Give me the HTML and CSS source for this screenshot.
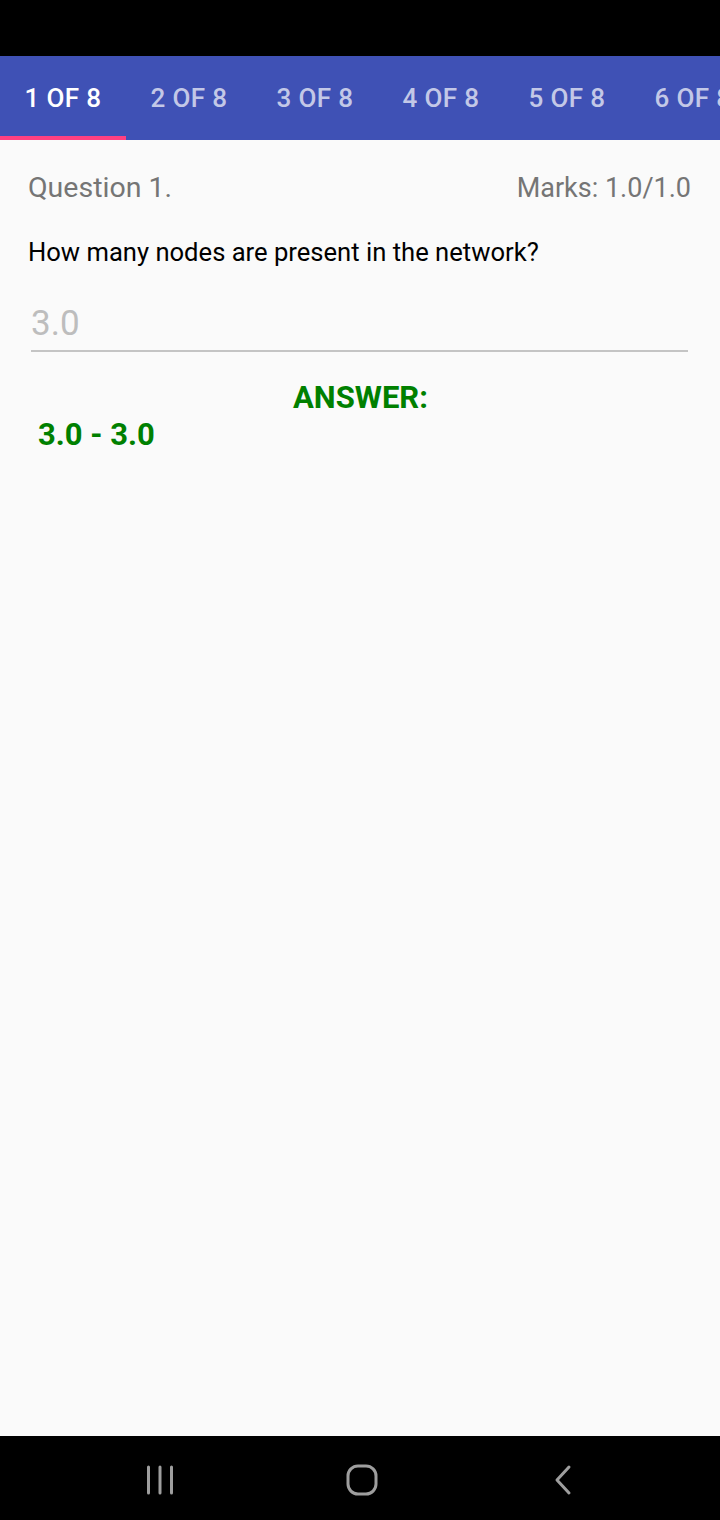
FILE: index.html
```html
<!DOCTYPE html>
<html>
<head>
<meta charset="utf-8">
<link rel="stylesheet" href="styles.css">
</head>
<body>
<div class="screen">
  <div class="status"></div>
  <div class="tabs">
    <div class="tab active">1 OF 8</div>
    <div class="tab">2 OF 8</div>
    <div class="tab">3 OF 8</div>
    <div class="tab">4 OF 8</div>
    <div class="tab">5 OF 8</div>
    <div class="tab">6 OF 8</div>
  </div>
  <div class="content">
    <div class="head-row">
      <span class="qnum">Question 1.</span>
      <span class="marks">Marks: 1.0/1.0</span>
    </div>
    <div class="qtext">How many nodes are present in the network?</div>
    <div class="field"><span class="field-val">3.0</span></div>
    <div class="answer-label">ANSWER:</div>
    <div class="answer-val">3.0 - 3.0</div>
  </div>
  <div class="navbar">
    <svg class="nav-icon" width="40" height="40" viewBox="0 0 40 40">
      <g stroke="#9e9e9e" stroke-width="3" stroke-linecap="round" fill="none">
        <line x1="8.5" y1="7" x2="8.5" y2="33"/>
        <line x1="20" y1="7" x2="20" y2="33"/>
        <line x1="31.5" y1="7" x2="31.5" y2="33"/>
      </g>
    </svg>
    <svg class="nav-icon" width="40" height="40" viewBox="0 0 40 40">
      <rect x="6" y="6" width="28" height="28" rx="10" ry="10" stroke="#9e9e9e" stroke-width="3" fill="none"/>
    </svg>
    <svg class="nav-icon" width="40" height="40" viewBox="0 0 40 40">
      <polyline points="25,7 13,20 25,33" stroke="#9e9e9e" stroke-width="3" stroke-linecap="round" stroke-linejoin="round" fill="none"/>
    </svg>
  </div>
</div>
</body>
</html>
```
FILE: styles.css
```css
* { box-sizing: border-box; }
html, body { margin: 0; padding: 0; }
body {
  width: 720px;
  height: 1520px;
  font-family: Roboto, "Noto Sans", sans-serif;
  background: #fafafa;
  overflow: hidden;
}
.screen {
  width: 720px;
  height: 1520px;
  display: flex;
  flex-direction: column;
}
.status {
  height: 56px;
  background: #000;
  flex: none;
}
.tabs {
  height: 84px;
  background: #3f51b5;
  display: flex;
  flex: none;
  overflow: hidden;
}
.tab {
  flex: none;
  width: 126px;
  display: flex;
  align-items: center;
  justify-content: center;
  font-size: 26px;
  font-weight: 500;
  letter-spacing: 0.4px;
  color: rgba(255,255,255,0.7);
  white-space: nowrap;
  border-bottom: 4px solid transparent;
  padding-top: 4px;
}
.tab.active {
  color: #fff;
  border-bottom-color: #ff4081;
}
.content {
  flex: 1;
  padding: 28px 29px 0 28px;
  display: flex;
  flex-direction: column;
}
.head-row {
  display: flex;
  justify-content: space-between;
  align-items: baseline;
  font-size: 28.5px;
  color: #757575;
  line-height: 40px;
}
.marks {
  font-size: 27px;
}
.qtext {
  margin-top: 29px;
  font-size: 25.6px;
  color: #000;
  line-height: 30px;
}
.field {
  margin: 35px 3px 0 3px;
  border-bottom: 2px solid #c4c4c4;
  height: 50px;
  font-size: 35px;
  color: #bdbdbd;
  line-height: 44px;
}
.answer-label {
  margin-top: 27px;
  text-align: center;
  font-size: 31px;
  font-weight: 700;
  color: #008000;
  line-height: 38px;
  padding-left: 2px;
}
.answer-val {
  margin-left: 10px;
  font-size: 31px;
  font-weight: 700;
  color: #008000;
  line-height: 36px;
}
.navbar {
  height: 84px;
  flex: none;
  background: #000;
  display: flex;
  align-items: center;
  justify-content: space-between;
  padding: 4px 136px 0 140px;
}
.nav-icon { display: block; }
```
